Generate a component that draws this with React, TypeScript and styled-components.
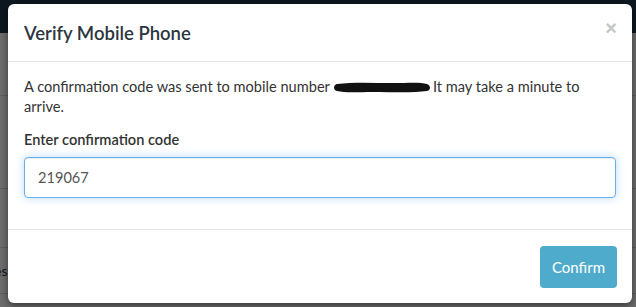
import React from "react";
import styled, { createGlobalStyle } from "styled-components";

const Global = createGlobalStyle`
  html, body { margin: 0; padding: 0; }
  body {
    width: 636px; height: 307px; overflow: hidden;
    font-family: "Lato", "Open Sans", sans-serif;
    background: #ffffff;
  }
`;

const Page = styled.div`
  position: relative;
  width: 636px;
  height: 307px;
  overflow: hidden;
  background: #f4f4f4;
  display: flex;
  flex-direction: column;
`;

const NavBar = styled.div`
  height: 33px;
  background: #1d3448;
  flex: none;
`;

const BgSection = styled.div<{ $h: number }>`
  height: ${(p) => p.$h}px;
  border-bottom: 1px solid #d0d0d0;
  display: flex;
  align-items: center;
  font-family: "Lato", sans-serif;
  color: #222;
  overflow: hidden;
`;

const BigText = styled.span`
  font-size: 44px;
  margin-left: -20px;
  color: #111;
`;

const SmallText = styled.span`
  font-size: 14px;
  margin-left: -6px;
  color: #333;
`;

const Backdrop = styled.div`
  position: absolute;
  inset: 0;
  background: rgba(0, 0, 0, 0.55);
`;

const Modal = styled.div`
  position: absolute;
  left: 8px;
  top: 4px;
  width: 624px;
  height: 299px;
  background: #fff;
  border-radius: 6px;
  box-shadow: 0 3px 9px rgba(0, 0, 0, 0.5);
  display: flex;
  flex-direction: column;
  color: #333;
  font-family: "Lato", "Open Sans", sans-serif;
`;

const Header = styled.div`
  height: 57px;
  border-bottom: 1px solid #e5e5e5;
  display: flex;
  align-items: center;
  justify-content: space-between;
  padding: 0 15px 0 16px;
  box-sizing: content-box;
`;

const Title = styled.h4`
  margin: 0;
  font-size: 18.5px;
  font-weight: 600;
  color: #2b3640;
`;

const Close = styled.button`
  border: 0;
  background: none;
  padding: 0;
  margin-top: -9px;
  font-size: 20px;
  line-height: 1;
  font-weight: 700;
  color: #c6c6c6;
  cursor: pointer;
  font-family: "Liberation Sans", sans-serif;
`;

const Body = styled.div`
  padding: 15px 16px 0 16px;
  flex: 1;
  border-bottom: 1px solid #e5e5e5;
`;

const Message = styled.p`
  margin: 0 0 13px 0;
  font-size: 14.6px;
  line-height: 20px;
  color: #333;
`;

const Redacted = styled.svg`
  display: inline-block;
  vertical-align: -1px;
  margin: 0 2px 0 3px;
`;

const Label = styled.label`
  display: block;
  font-size: 14.6px;
  font-weight: 600;
  line-height: 20px;
  margin-bottom: 7px;
  color: #333;
`;

const Input = styled.input`
  display: block;
  box-sizing: border-box;
  width: 592px;
  height: 41px;
  padding: 6px 13px;
  font-size: 14.6px;
  font-family: inherit;
  color: #555;
  border: 1px solid #66afe9;
  border-radius: 4px;
  outline: 0;
  box-shadow: inset 0 1px 1px rgba(0, 0, 0, 0.075), 0 0 8px rgba(102, 175, 233, 0.45);
`;

const Footer = styled.div`
  height: 73px;
  display: flex;
  align-items: center;
  justify-content: flex-end;
  padding: 0 15px 0 16px;
`;

const Button = styled.button`
  width: 77px;
  height: 42px;
  border: 0;
  border-radius: 4px;
  background: #4fabcb;
  color: #fff;
  font-size: 15px;
  font-family: inherit;
  cursor: pointer;
`;

export default function App() {
  return (
    <>
      <Global />
      <Page>
        <NavBar />
        <BgSection $h={62} />
        <BgSection $h={92}>
          <BigText>a</BigText>
        </BgSection>
        <BgSection $h={58} />
        <BgSection $h={45}>
          <SmallText>es</SmallText>
        </BgSection>
        <Backdrop />
        <Modal>
          <Header>
            <Title>Verify Mobile Phone</Title>
            <Close aria-label="Close">×</Close>
          </Header>
          <Body>
            <Message>
              A confirmation code was sent to mobile number
              <Redacted width="98" height="11" viewBox="0 0 98 11">
                <path
                  d="M4 2 C20 0 40 1 60 1 C75 1 88 0 94 2 C98 4 98 8 94 9 C80 11 60 10 40 10 C25 10 12 11 4 9 C0 8 0 3 4 2 Z"
                  fill="#111"
                />
              </Redacted>
              It may take a minute to arrive.
            </Message>
            <Label>Enter confirmation code</Label>
            <Input defaultValue="219067" />
          </Body>
          <Footer>
            <Button>Confirm</Button>
          </Footer>
        </Modal>
      </Page>
    </>
  );
}
